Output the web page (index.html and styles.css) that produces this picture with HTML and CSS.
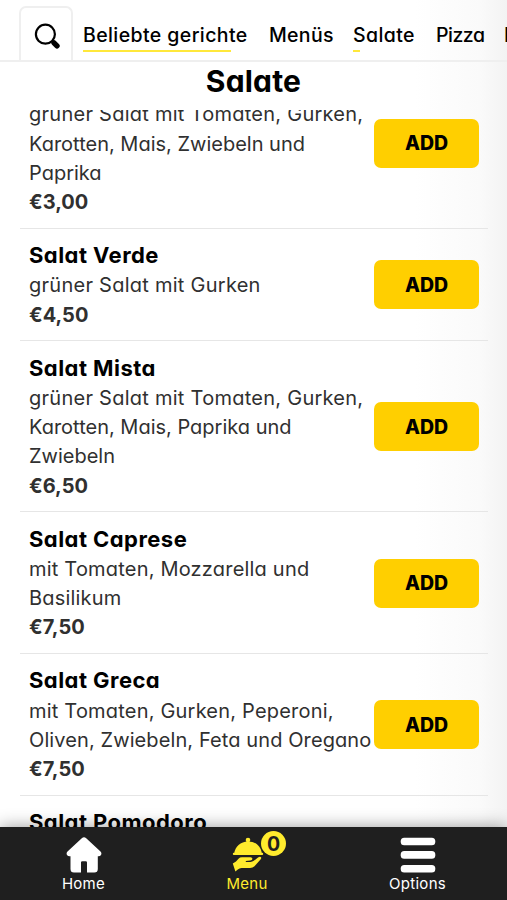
FILE: index.html
```html
<!DOCTYPE html>
<html lang="de">
<head>
<meta charset="utf-8">
<meta name="viewport" content="width=device-width, initial-scale=1">
<title>Salate</title>
<link rel="stylesheet" href="styles.css">
</head>
<body>
<div class="app">
  <header class="tabs">
    <button class="search" aria-label="Suche">
      <svg width="27" height="27" viewBox="0 0 27 27"><circle cx="11.4" cy="11.2" r="9.5" fill="none" stroke="#000" stroke-width="2.2"/><path d="M18 17.8l1.7 1.7" stroke="#000" stroke-width="2.4"/><path d="M20 19.8l3 3" stroke="#000" stroke-width="5.4" stroke-linecap="round"/></svg>
    </button>
    <nav class="tab-list">
      <a class="tab tab-popular">Beliebte gerichte</a>
      <a class="tab tab-menus">Menüs</a>
      <a class="tab tab-salads">Salate</a>
      <a class="tab tab-pizza">Pizza</a>
      <a class="tab">Pasta</a>
    </nav>
  </header>
  <h1 class="heading">Salate</h1>
  <main class="list">
    <article class="dish dish-first">
      <div class="info"><h2>Salat Klein</h2><p><span class="wide">grüner Salat mit Tomaten, Gurken,</span><br>Karotten, Mais, Zwiebeln und<br>Paprika</p><strong>€3,00</strong></div>
      <button class="add">ADD</button>
    </article>
    <article class="dish">
      <div class="info"><h2>Salat Verde</h2><p><span class="wide">grüner Salat mit Gurken</span></p><strong>€4,50</strong></div>
      <button class="add">ADD</button>
    </article>
    <article class="dish">
      <div class="info"><h2>Salat Mista</h2><p><span class="wide">grüner Salat mit Tomaten, Gurken,</span><br>Karotten, Mais, Paprika und<br>Zwiebeln</p><strong>€6,50</strong></div>
      <button class="add">ADD</button>
    </article>
    <article class="dish">
      <div class="info"><h2>Salat Caprese</h2><p><span class="medium">mit Tomaten, Mozzarella und<br>Basilikum</span></p><strong>€7,50</strong></div>
      <button class="add">ADD</button>
    </article>
    <article class="dish">
      <div class="info"><h2>Salat Greca</h2><p><span class="medium">mit Tomaten, Gurken, Peperoni,</span><br><span class="snug">Oliven, Zwiebeln, Feta und Oregano</span></p><strong>€7,50</strong></div>
      <button class="add">ADD</button>
    </article>
    <article class="dish">
      <div class="info"><h2>Salat Pomodoro</h2></div>
    </article>
  </main>
  <footer class="bar">
    <a class="bar-item">
      <svg width="36" height="36" viewBox="0 0 36 36" fill="#fff"><path d="M15.8 1.3Q18-.7 20.2 1.3L34.5 14.6Q36 16.2 35 18Q34 19.6 31.8 19.3V32Q31.8 35.5 28.3 35.5H21V25.5Q21 24.3 19.8 24.3H16.2Q15 24.3 15 25.5V35.5H8Q4.5 35.5 4.5 32V19.3Q2 19.6 1 18Q0 16.2 1.5 14.6Z"/></svg>
      <span>Home</span>
    </a>
    <a class="bar-item active">
      <span class="menu-icon">
        <svg width="32" height="36" viewBox="0 0 32 36" fill="#ffeb2d"><circle cx="16" cy="3.1" r="2.3"/><path d="M2.2 16.3C3 9.5 8.5 4.4 16 4.4S29 9.5 29.8 16.3Z"/><rect x=".8" y="15.8" width="30.4" height="2.3" rx="1.1"/><path d="M.8 26.4L4 24.6L6.5 21.7Q7.8 20.3 10 20.3H18.5Q20.6 20.4 20.4 22Q20.2 23.3 18.2 23.4L13.8 24V25H18.5Q20.3 24.9 21.8 23.8L26 20.4Q28.5 18.9 29.2 20.6Q29.4 21.4 28.5 22.6L22.5 29.2Q20.8 31 18 31H9.5Q7.5 31 5.8 32.5L3.4 34.6Z"/></svg>
        <b class="badge">0</b>
      </span>
      <span>Menu</span>
    </a>
    <a class="bar-item">
      <svg width="36" height="36" viewBox="0 0 36 36" fill="#fff"><rect x=".7" y=".7" width="34.6" height="7.6" rx="3.5"/><rect x=".7" y="14.1" width="34.6" height="7.6" rx="3.5"/><rect x=".7" y="27.9" width="34.6" height="7.6" rx="3.5"/></svg>
      <span>Options</span>
    </a>
  </footer>
</div>
</body>
</html>
```

FILE: styles.css
```css
* { box-sizing: border-box; }
body, h1, h2, p { margin: 0; }
body {
  font-family: Inter, "Noto Sans", sans-serif;
  font-feature-settings: "cv11";
  color: #000;
  background: #fff;
}
button { font: inherit; font-feature-settings: inherit; color: inherit; }
.app {
  height: 900px;
  display: flex;
  flex-direction: column;
  overflow: hidden;
  background: linear-gradient(to right, #fff 415px, #fafafa 480px, #f3f3f3 507px);
}
.tabs {
  flex: none;
  height: 62px;
  display: flex;
  align-items: flex-end;
  padding-left: 19px;
  border-bottom: 2px solid #efefef;
}
.search {
  flex: none;
  width: 54px;
  height: 54px;
  padding: 4px 0 0 3px;
  display: grid;
  place-items: center;
  background: #fff;
  border: 2px solid #efefef;
  border-bottom: 0;
  border-radius: 7px 7px 0 0;
}
.tab-list {
  display: flex;
  gap: 20px;
  padding: 0 0 8px 10px;
  white-space: nowrap;
}
.tab {
  height: 34px;
  font-size: 19.5px;
  line-height: 34px;
  font-weight: 550;
  background: linear-gradient(#ffe83b, #ffe83b) left bottom / 0 2px no-repeat;
}
.tab-popular { width: 166px; letter-spacing: .4px; background-size: 148px 2px; }
.tab-menus { width: 64px; letter-spacing: .3px; }
.tab-salads { width: 63px; letter-spacing: .4px; background-size: 7px 2px; }
.tab-pizza { width: 48px; letter-spacing: -.5px; }
.heading {
  flex: none;
  height: 48px;
  font-size: 30px;
  line-height: 38px;
  font-weight: 650;
  letter-spacing: .2px;
  text-align: center;
}
.list { flex: 1; min-height: 0; overflow: hidden; padding: 0 19px 0 20px; }
.dish {
  display: flex;
  align-items: center;
  justify-content: space-between;
  padding: 12.4px 9px 11.6px;
  border-bottom: 1px solid #e6e6e6;
}
.dish-first { margin-top: -52.3px; }
.info {
  width: 345px;
  flex: none;
  font-size: 20px;
  line-height: 29.2px;
  color: #303030;
  white-space: nowrap;
}
.info h2 {
  font-size: 22px;
  line-height: 29.2px;
  font-weight: 650;
  letter-spacing: .45px;
  color: #000;
}
.info p { padding-top: 1px; }
.info strong { display: block; margin-bottom: -1px; font-weight: 700; }
.wide { letter-spacing: .26px; }
.medium { letter-spacing: .2px; }
.snug { letter-spacing: .1px; }
.add {
  width: 105px;
  height: 49px;
  padding: 0;
  border: 0;
  border-radius: 7px;
  background: #ffcf00;
  font-size: 19.5px;
  font-weight: 800;
}
.bar {
  flex: none;
  position: relative;
  height: 73px;
  display: grid;
  grid-template-columns: 167px 160px 181px;
  background: #1f1f1f;
  box-shadow: 0 0 16px rgba(0, 0, 0, .4);
}
.bar-item {
  display: flex;
  flex-direction: column;
  align-items: center;
  padding-top: 10px;
  font-size: 15px;
  line-height: 22px;
  letter-spacing: .3px;
  color: #fff;
}
.active { color: #ffeb2d; }
.menu-icon { position: relative; left: 1px; height: 36px; }
.badge {
  position: absolute;
  left: 29px;
  top: -6.5px;
  width: 25px;
  height: 25px;
  border-radius: 50%;
  background: #ffeb2d;
  color: #1f1f1f;
  font-size: 19.5px;
  line-height: 26px;
  font-weight: 700;
  letter-spacing: 0;
  text-align: center;
}
```
